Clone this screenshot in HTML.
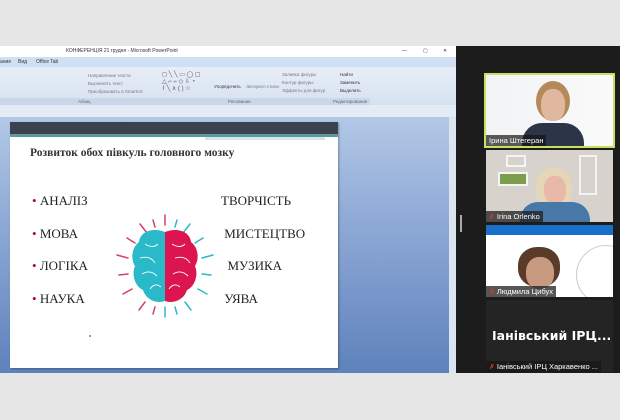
<!DOCTYPE html>
<html><head><meta charset="utf-8"><style>
*{margin:0;padding:0;box-sizing:border-box}
body{width:620px;height:420px;overflow:hidden;background:#e6e6e6;font-family:"Liberation Sans",sans-serif;position:relative}
.abs{position:absolute}
.serif{font-family:"Liberation Serif",serif;color:#222}
.lbl{position:absolute;left:0;bottom:0;height:11px;background:rgba(30,30,30,.75);color:#fff;font-size:7.5px;line-height:11px;padding:0 3px;white-space:nowrap}
.mic{color:#e33;font-size:7px;margin-right:2px}
</style></head><body>
<div class="abs" style="left:0;top:46px;width:620px;height:327px;background:#1c1c1c"></div>
<div class="abs" style="left:0;top:46px;width:456px;height:327px;background:#dfe8f5">
 <div class="abs" style="left:0;top:0;width:456px;height:11px;background:#fff;font-size:5px;color:#333;line-height:11px">
  <span class="abs" style="left:66px">КОНФЕРЕНЦІЯ 21 грудня - Microsoft PowerPoint</span>
  <span class="abs" style="left:402px">—</span><span class="abs" style="left:423px">▢</span><span class="abs" style="left:443px">✕</span></div>
 <div class="abs" style="left:0;top:11px;width:456px;height:10px;background:#cfe0f5;font-size:5px;color:#333;line-height:10px">
  <span class="abs" style="left:0">ание</span><span class="abs" style="left:18px">Вид</span><span class="abs" style="left:36px">Office Tab</span></div>
 <div class="abs" style="left:0;top:21px;width:456px;height:38px;background:linear-gradient(#e8eef7,#d6e1f0);font-size:4.5px;color:#778">
  <span class="abs" style="left:88px;top:6px">Направление текста</span>
  <span class="abs" style="left:88px;top:14px">Выровнять текст</span>
  <span class="abs" style="left:88px;top:22px">Преобразовать в SmartArt</span>
  <span class="abs" style="left:162px;top:4px;color:#556;font-size:6px">◻ ╲ ╲ ▭ ◯ ▢<br>△ ⌐ ⌐ ◇ ⇩ ◔<br>⌇ ╲ ∧ ( ) ☆</span>
  <span class="abs" style="left:214px;top:17px;color:#333">Упорядочить</span>
  <span class="abs" style="left:246px;top:17px">Экспресс-стили</span>
  <span class="abs" style="left:282px;top:5px">Заливка фигуры</span>
  <span class="abs" style="left:282px;top:13px">Контур фигуры</span>
  <span class="abs" style="left:282px;top:21px">Эффекты для фигур</span>
  <span class="abs" style="left:340px;top:5px;color:#334">Найти</span>
  <span class="abs" style="left:340px;top:13px;color:#334">Заменить</span>
  <span class="abs" style="left:340px;top:21px;color:#334">Выделить</span>
  <div class="abs" style="left:0;top:31px;width:370px;height:7px;background:#c9d7ea;color:#667;font-size:4.5px;line-height:7px">
   <span class="abs" style="left:78px">Абзац</span><span class="abs" style="left:228px">Рисование</span><span class="abs" style="left:333px">Редактирование</span></div>
 </div>
 <div class="abs" style="left:0;top:59px;width:456px;height:12px;background:#e4ebf5"></div>
 <div class="abs" style="left:0;top:71px;width:449px;height:256px;background:linear-gradient(#b3c8e6,#8faad6 40%,#5f82bc)"></div>
 <div class="abs" style="left:449px;top:71px;width:7px;height:256px;background:#dbe5f2"></div>
 <div class="abs" style="left:10px;top:76px;width:328px;height:246px;background:#fff;box-shadow:1px 1px 2px rgba(0,0,0,.3)">
  <div class="abs" style="left:0;top:0;width:328px;height:12px;background:#3c4150"></div>
  <div class="abs" style="left:0;top:12px;width:328px;height:3px;background:#5f9a9a"></div>
  <div class="abs" style="left:195px;top:15px;width:120px;height:3px;background:#d9e4e4"></div>
  <div class="abs serif" style="left:20px;top:25px;font-size:11.5px;font-weight:bold;color:#333">Розвиток обох півкуль головного мозку</div>
  <div class="abs serif" style="left:22px;top:63px;font-size:13px;line-height:32.7px"><span style="color:#a05">•</span> АНАЛІЗ<br><span style="color:#a05">•</span> МОВА<br><span style="color:#a05">•</span> ЛОГІКА<br><span style="color:#a05">•</span> НАУКА</div>
  <div class="abs serif" style="left:211px;top:63px;font-size:13px;line-height:32.7px">ТВОРЧІСТЬ<br>&nbsp;МИСТЕЦТВО<br>&nbsp;&nbsp;МУЗИКА<br>&nbsp;УЯВА</div>
  <div class="abs" style="left:79px;top:213px;width:2px;height:2px;background:#999"></div>
  <svg class="abs" style="left:100px;top:80px" width="110" height="120" viewBox="0 0 110 120">
   <g stroke-width="1.5" stroke-linecap="round">
    <line x1="55" y1="13" x2="55" y2="23" stroke="#d04068"/>
    <line x1="55" y1="105" x2="55" y2="115" stroke="#2bb8c8"/>
    <g stroke="#d04068"><line x1="30" y1="22" x2="37" y2="31"/><line x1="17" y1="36" x2="25" y2="41"/><line x1="7" y1="53" x2="18" y2="56"/><line x1="9" y1="73" x2="18" y2="72"/><line x1="13" y1="92" x2="22" y2="87"/><line x1="29" y1="108" x2="35" y2="100"/><line x1="43" y1="18" x2="45" y2="25"/><line x1="43" y1="112" x2="45" y2="105"/></g>
    <g stroke="#2bb8c8"><line x1="80" y1="22" x2="73" y2="31"/><line x1="93" y1="36" x2="85" y2="41"/><line x1="103" y1="53" x2="92" y2="56"/><line x1="101" y1="73" x2="92" y2="72"/><line x1="97" y1="92" x2="88" y2="87"/><line x1="81" y1="108" x2="75" y2="100"/><line x1="67" y1="18" x2="65" y2="25"/><line x1="67" y1="112" x2="65" y2="105"/></g>
   </g>
   <path d="M55 30 C42 25 30 30 29 40 C21 46 21 58 25 64 C21 74 26 85 33 88 C36 98 47 102 55 99Z" fill="#29b9c9"/>
   <path d="M55 30 C68 25 80 30 81 40 C89 46 89 58 85 64 C89 74 84 85 77 88 C74 98 63 102 55 99Z" fill="#dc1450"/>
   <g stroke="#fff" stroke-width="0.9" fill="none"><path d="M35 42 q8 5 13 0 M30 56 q10 -3 15 5 M32 72 q8 -5 15 2 M40 87 q5 -7 11 -2 M62 42 q8 5 13 0 M65 56 q10 -3 15 5 M63 72 q8 -5 15 2 M59 87 q5 -7 11 -2"/></g>
  </svg>
 </div>
</div>
<div class="abs" style="left:460px;top:215px;width:2px;height:17px;background:#aaa"></div>
<div class="abs" style="left:484px;top:73px;width:131px;height:75px;background:linear-gradient(90deg,#f2f3f5,#fafafa);border:2px solid #c8e060;overflow:hidden">
 <div class="abs" style="left:50px;top:6px;width:34px;height:40px;border-radius:50%;background:#b58a5a"></div>
 <div class="abs" style="left:55px;top:14px;width:24px;height:32px;border-radius:45%;background:#e0b8a0"></div>
 <div class="abs" style="left:36px;top:48px;width:62px;height:30px;border-radius:20px 20px 0 0;background:#2c3448"></div>
 <div class="lbl" style="left:0;bottom:0;background:rgba(20,20,20,.7)">Ірина Штегеран</div>
</div>
<div class="abs" style="left:486px;top:150px;width:127px;height:72px;background:#d8d2cc;overflow:hidden">
 <div class="abs" style="left:20px;top:5px;width:20px;height:12px;border:2px solid #f4f4f4"></div>
 <div class="abs" style="left:12px;top:22px;width:30px;height:14px;border:2px solid #f4f4f4;background:#7c9e4c"></div>
 <div class="abs" style="left:93px;top:5px;width:18px;height:40px;border:2px solid #f4f4f4"></div>
 <div class="abs" style="left:50px;top:18px;width:36px;height:42px;border-radius:45%;background:#e6d6b8"></div>
 <div class="abs" style="left:58px;top:26px;width:22px;height:28px;border-radius:45%;background:#e8b8a8"></div>
 <div class="abs" style="left:34px;top:52px;width:70px;height:24px;border-radius:18px 18px 0 0;background:#4878a8"></div>
 <div class="lbl"><span class="mic">✗</span>Irina Orlenko</div>
</div>
<div class="abs" style="left:486px;top:225px;width:127px;height:72px;background:#fff;overflow:hidden">
 <div class="abs" style="left:0;top:0;width:127px;height:10px;background:#1a70c8"></div>
 <div class="abs" style="left:90px;top:20px;width:60px;height:60px;border-radius:50%;border:1px solid #ccc"></div>
 <div class="abs" style="left:32px;top:22px;width:42px;height:40px;border-radius:45%;background:#5a3a28"></div>
 <div class="abs" style="left:40px;top:32px;width:28px;height:32px;border-radius:45%;background:#c89a80"></div>
 <div class="lbl"><span class="mic">✗</span>Людмила Цибух</div>
</div>
<div class="abs" style="left:486px;top:300px;width:127px;height:72px;background:#242424;overflow:hidden">
 <div class="abs" style="left:6px;top:28px;color:#fff;font-weight:bold;font-size:12.5px;font-family:'DejaVu Sans',sans-serif;white-space:nowrap">Іанівський ІРЦ...</div>
 <div class="lbl" style="background:#1a1a1a"><span class="mic">✗</span>Іанівський ІРЦ Харкавенко ...</div>
</div>
</body></html>
